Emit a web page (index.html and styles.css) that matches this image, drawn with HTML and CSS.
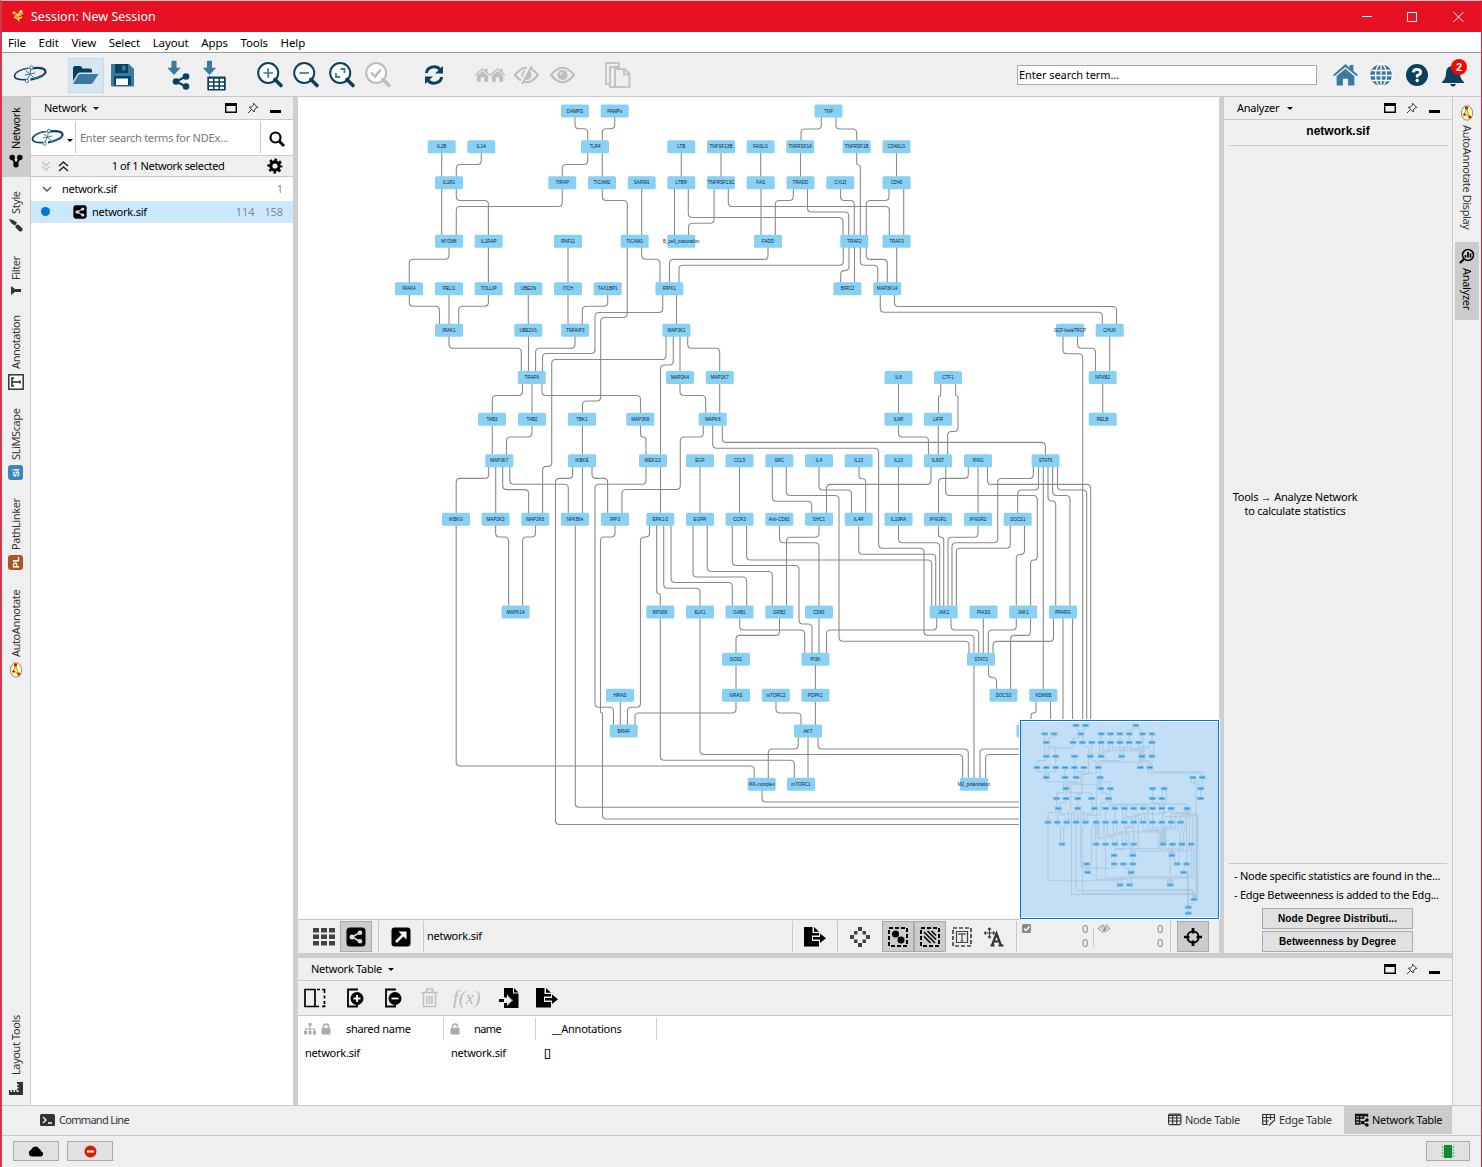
FILE: index.html
```html
<!DOCTYPE html>
<html lang="en">
<head>
<meta charset="utf-8">
<title>Session: New Session</title>
<link rel="stylesheet" href="styles.css">
</head>
<body>
<svg class="defs" width="0" height="0">
  <symbol id="logo" viewBox="0 0 34 20">
    <path d="M15 3.2C8 4.200 1.600 7.300 1.500 11c0 2.800 5 4.200 11.500 3.600" fill="none" stroke="#0b4160" stroke-width="1.600"/>
    <path d="M17 3.400c8-1 15-.4 15.500 2.900.3 3-5.500 6.600-15 8.300" fill="none" stroke="#0b4160" stroke-width="2.200"/>
    <path d="M3 8c3-3 7-4.500 14-4.800M32 8c-3 3-7 5-12 6" fill="none" stroke="#3a7a9f" stroke-width="1"/>
    <path d="M18 3.500L17 9l-3 6M13 6l4 3 4 4M12 10l5-1 5-1" fill="none" stroke="#3a7a9f" stroke-width="1"/>
    <circle cx="18.500" cy="2.500" r="1.600" fill="#fff" stroke="#3a7a9f"/><circle cx="14" cy="16" r="1.600" fill="#fff" stroke="#3a7a9f"/>
  </symbol>
  <symbol id="share" viewBox="0 0 18 18">
    <path d="M14 4L4 9l10 5" fill="none" stroke="currentColor" stroke-width="2.200"/>
    <circle cx="14" cy="4" r="3.300" fill="currentColor"/><circle cx="4" cy="9" r="3.300" fill="currentColor"/><circle cx="14" cy="14" r="3.300" fill="currentColor"/>
  </symbol>
  <symbol id="sharebox" viewBox="0 0 20 20">
    <rect x=".5" y=".5" width="19" height="19" rx="3.500" fill="#000"/>
    <path d="M14 5.500L6 10l8 4.500" fill="none" stroke="#ddd" stroke-width="1.600"/>
    <circle cx="14" cy="5.700" r="2.300" fill="#ddd"/><circle cx="6" cy="10" r="2.500" fill="#ddd"/><circle cx="14" cy="14.300" r="2.300" fill="#ddd"/>
  </symbol>
  <symbol id="lens" viewBox="0 0 36 36">
    <circle cx="16.200" cy="16" r="10" fill="#fff" fill-opacity=".8" stroke="currentColor" stroke-width="2"/>
    <path d="M23 22.500l6 6" stroke="currentColor" stroke-width="3.600" stroke-linecap="round"/>
  </symbol>
  <symbol id="float" viewBox="0 0 12 12"><path d="M.7 3.200V10.300H11.300V3" fill="none" stroke="#000" stroke-width="1.400"/><path d="M0 1h12v3H0z"/></symbol>
  <symbol id="pin" viewBox="0 0 12 12"><path d="M6.500 1.200l4.300 4.300-1.600.3L7.400 8l-.2 2L2.400 5.200l2-.2L6.600 3zM4.500 7.700L1 11" fill="none" stroke="#333"/></symbol>
  <symbol id="eye" viewBox="0 0 26 18">
    <path d="M1 9Q13-6 25 9 13 24 1 9z" fill="none" stroke="currentColor" stroke-width="2.200"/>
    <circle cx="13" cy="9" r="5.300" fill="currentColor"/><path d="M10.500 9a2.500 2.500 0 0 1 2.500-2.500" fill="none" stroke="#efefef" stroke-width="1.200"/>
  </symbol>
  <symbol id="eyeoff" viewBox="0 0 26 18">
    <use href="#eye" width="26" height="18"/><path d="M17-1L7 19" stroke="#efefef" stroke-width="4"/><path d="M18.500 0L8.500 18" stroke="currentColor" stroke-width="2"/>
  </symbol>
  <symbol id="house" viewBox="0 0 24 21">
    <path d="M12 0l4 3.500V1h3.500v5.500L24 10.500l-1.300 1.300L12 2.800 1.300 11.800 0 10.500zM12 4.600l8.500 7V20.500h-6V14h-5v6.500h-6v-9z" fill="currentColor"/>
  </symbol>
  <symbol id="export" viewBox="0 0 22 20">
    <path d="M0 0h8.500v6H15v2.500H8V14h7v5.500H0zM10 0l5 4.800h-5z"/><path d="M9 10h7V6.500l6 4.700-6 4.700V12.500H9z"/>
  </symbol>
  <symbol id="import" viewBox="0 0 20 20">
    <path d="M5 0h9v5.500h5.500V20H5v-5h3v3l6-5.500-6-6V9.500H5z"/><path d="M15 0l4.500 4.500H15zM0 11h9V8l4.500 4.500L9 17v-3H0z"/><path d="M5 11h4V8.500l4 4-4 4V14H5z" fill="#efefef"/>
  </symbol>
  <symbol id="lock" viewBox="0 0 10 12"><path d="M2.500 6V3.500a2.500 2.500 0 0 1 5 0V6" fill="none" stroke="#aaa" stroke-width="1.500"/><rect x=".5" y="5" width="9" height="6.500" rx="1" fill="#aaa"/></symbol>
  <symbol id="anno" viewBox="0 0 16 16"><ellipse cx="8" cy="8" rx="5.700" ry="7.200" fill="#ffffb0" stroke="#888"/><path d="M7.500 4L5.500 9l5 2.500z" fill="none" stroke="#6b3"/><circle cx="7.500" cy="3" r="1.700" fill="#f00"/><circle cx="5.500" cy="9.500" r="1.300" fill="#f00"/><circle cx="10.800" cy="12" r="1.500" fill="#f00"/></symbol>
  <symbol id="tbl" viewBox="0 0 14 14"><rect x=".6" y="1.100" width="12.300" height="10.500" rx="1.500" fill="none" stroke="#333" stroke-width="1.200"/><path d="M.6 2.500h12.300M.6 5h12.300M.6 8h12.300M4.700 2v9.500M8.700 2v9.500" stroke="#333" stroke-width="1.200"/></symbol>
</svg>

<div class="window">
  <header class="titlebar">
    <svg width="14" height="16" viewBox="0 0 14 16"><path d="M3 3l4 3 3-4M4 7l5-1 3-2M7 6l1 8M3 8l4 2 4-2" stroke="#ffd54a" stroke-width="1.500" fill="none"/><circle cx="3" cy="4" r="1.800" fill="#f7a72b"/><circle cx="10" cy="2.500" r="1.500" fill="#fce9a2"/><circle cx="8" cy="13" r="1.500" fill="#875c1e"/></svg>
    <span class="title">Session: New Session</span>
    <svg class="winbtns" width="104" height="12" viewBox="0 0 104 12"><path d="M1 5.500h10M46.500 1.500h9v9h-9zM92.500 1l10 10M102.500 1l-10 10" fill="none" stroke="#fff"/></svg>
  </header>
  <nav class="menu"><span>File</span><span>Edit</span><span>View</span><span>Select</span><span>Layout</span><span>Apps</span><span>Tools</span><span>Help</span></nav>

  <div class="toolbar">
    <span class="slot"><svg width="34" height="20"><use href="#logo"/></svg></span>
    <span class="gap"></span>
    <span class="slot active"><svg width="36" height="36" viewBox="0 0 36 36"><path d="M5 24V11q0-2 2-2h5q2 0 2.500 2.500h7.500q2 0 2 2v2H12q-2 0-3 2z" fill="#0b4160"/><path d="M12 17h18.500L25 25.500q-1 1.500-3 1.500H5l5-8.500Q11 17 12 17z" fill="#3a7a9f"/></svg></span>
    <span class="slot"><svg width="36" height="36" viewBox="0 0 36 36"><path d="M8 7h17l5 5v16.500q0 1-1 1H8q-1 0-1-1V8q0-1 1-1z" fill="#3a7a9f"/><path d="M11 7h13v9H11zM10 19h17v9.500H10z" fill="#0b4160"/><path d="M12 21.500h12V28H12z" fill="#fff"/><path d="M18 8.500h3.500v5H18z" fill="#3a7a9f"/></svg></span>
    <span class="gap"></span>
    <span class="slot"><svg width="36" height="36" viewBox="0 0 36 36"><path d="M11.500 3.700h5v7h4.200L14 18 7.300 10.700h4.200z" fill="#3a7a9f"/><svg x="12" y="15.500" width="18" height="18" color="#0b4160"><use href="#share"/></svg></svg></span>
    <span class="slot"><svg width="36" height="36" viewBox="0 0 36 36"><path d="M11 3.700h5v7h4.200L13.500 18 6.800 10.700H11z" fill="#3a7a9f"/><rect x="11.300" y="19.500" width="18.500" height="14" rx="1" fill="#0b4160"/><path d="M13 21.700h4v2.600h-4zM18.500 21.700h4v2.600h-4zM24 21.700h4v2.600h-4zM13 25.700h4v2.600h-4zM18.500 25.700h4v2.600h-4zM24 25.700h4v2.600h-4zM13 29.700h4v2.300h-4zM18.500 29.700h4v2.300h-4zM24 29.700h4v2.300h-4z" fill="#fff"/></svg></span>
    <span class="gap"></span>
    <span class="slot navy"><svg width="36" height="36" viewBox="0 0 36 36"><use href="#lens"/><path d="M11.500 16h9.500M16.200 11.200v9.600" stroke="#3a7a9f" stroke-width="1.700"/></svg></span>
    <span class="slot navy"><svg width="36" height="36" viewBox="0 0 36 36"><use href="#lens"/><path d="M11.500 16h9.500" stroke="#3a7a9f" stroke-width="1.700"/></svg></span>
    <span class="slot navy"><svg width="36" height="36" viewBox="0 0 36 36"><use href="#lens"/><path d="M16.500 12h4v4M12 16v4h4" fill="none" stroke="#3a7a9f" stroke-width="1.800"/></svg></span>
    <span class="slot dim"><svg width="36" height="36" viewBox="0 0 36 36"><use href="#lens"/><path d="M11 15.500l4 4 6-7" fill="none" stroke="#bbb" stroke-width="2.400"/></svg></span>
    <span class="gap"></span>
    <span class="slot navy"><svg width="36" height="36" viewBox="0 0 36 36"><path d="M10.500 16a7.500 6.500 0 0 1 13.500-3.500M25.500 20a7.500 6.500 0 0 1-13.500 3.500" fill="none" stroke="#0b4160" stroke-width="3"/><path d="M27 9v7.500h-8zM9 27v-7.500h8z" fill="#0b4160"/></svg></span>
    <span class="gap"></span>
    <span class="slot dim"><svg width="32" height="18" viewBox="0 0 32 18"><svg x="0" y="2" width="17" height="14"><use href="#house"/></svg><svg x="15" y="2" width="17" height="14"><use href="#house"/></svg></svg></span>
    <span class="slot dim"><svg width="25" height="18"><use href="#eyeoff"/></svg></span>
    <span class="slot dim"><svg width="25" height="18"><use href="#eye"/></svg></span>
    <span class="gap"></span>
    <span class="slot"><svg width="26" height="28" viewBox="0 0 26 28"><g fill="#efefef" stroke="#c4c4c4" stroke-width="2"><path d="M1 2h13v21H1z"/><path d="M5 6h9v20H5z"/><path d="M10 8h9.500l5 5V26H10zM19 8v5.500h6"/></g></svg></span>
    <div class="search">Enter search term...</div>
    <span class="slot"><svg width="25" height="22" color="#3a7a9f"><use href="#house"/></svg></span>
    <span class="slot"><svg width="24" height="24" viewBox="0 0 24 24"><circle cx="12" cy="12" r="11.800" fill="#fff"/><circle cx="12" cy="12" r="10.800" fill="#3a7a9f"/><path d="M12 1v22M2.500 7.500h19M1 12.500h22M3 17.500h18" stroke="#fff" stroke-width="1.300"/><ellipse cx="12" cy="12" rx="5.500" ry="11" fill="none" stroke="#fff" stroke-width="1.300"/></svg></span>
    <span class="slot"><svg width="24" height="24" viewBox="0 0 24 24"><circle cx="12" cy="12" r="11" fill="#0b4160"/><path d="M8.300 9.300Q8.500 6.300 12 6.300t3.700 2.900Q15.700 11.300 12.200 12.500v2" fill="none" stroke="#fff" stroke-width="2.700"/><circle cx="12.200" cy="17.500" r="1.700" fill="#fff"/></svg></span>
    <span class="slot bell"><svg width="24" height="24" viewBox="0 0 24 24"><path d="M1 19q4-3 4-9 0-7 7-7t7 7q0 6 4 9v1H1zM9 21h6q-1 2.500-3 2.500T9 21z" fill="#0b4160"/></svg><b class="badge">2</b></span>
  </div>

  <main class="body">
    <aside class="rail left">
      <div class="tab on" style="height:80px"><svg width="14" height="14" viewBox="0 0 14 14"><path d="M3 3.500l4 7.500 4-7.500" stroke="#000" stroke-width="2" fill="none"/><circle cx="3.200" cy="3.500" r="2.700"/><circle cx="10.800" cy="3.500" r="2.700"/><circle cx="7" cy="10.800" r="2.700"/></svg><span>Network</span></div>
      <div class="tab" style="height:65px"><svg width="14" height="14" viewBox="0 0 14 14"><path d="M0 0q4 0 8 3.500L6 6.500Q2 5 0 0z" fill="#333"/><path d="M8.500 7.500l3 3" stroke="#333" stroke-width="4" stroke-linecap="round"/></svg><span>Style</span></div>
      <div class="tab" style="height:64px"><svg width="12" height="12" viewBox="0 0 12 12"><path d="M1 1v9l4-3h6V4H5z" fill="#333"/></svg><span>Filter</span></div>
      <div class="tab" style="height:93px"><svg width="16" height="16" viewBox="0 0 16 16"><rect x=".8" y=".8" width="14.400" height="14.400" fill="#fff" stroke="#333" stroke-width="1.500"/><path d="M6 4H4v8h2M4 8h8M12 6.500v3" fill="none" stroke="#222" stroke-width="1.500"/></svg><span>Annotation</span></div>
      <div class="tab" style="height:90px"><b class="chip blue">Si</b><span>SLiMScape</span></div>
      <div class="tab" style="height:90px"><b class="chip brown">PL</b><span>PathLinker</span></div>
      <div class="tab" style="height:108px"><svg width="16" height="16"><use href="#anno"/></svg><span>AutoAnnotate</span></div>
      <div class="tab last" style="height:93px"><svg width="16" height="16" viewBox="0 0 16 16"><path d="M15 2v13H1v-5h1.500v2H4v-2h1.500v2H7v-2h1.500v2h2v-2H9V8.500h1.500V7H9V5.500h1.500V4H9V2z" fill="#333"/></svg><span>Layout Tools</span></div>
    </aside>

    <section class="netpanel">
      <div class="phead"><span class="s-net">Network</span><i class="caret up1"></i><span class="tools"><svg width="12" height="12"><use href="#float"/></svg><svg width="12" height="12"><use href="#pin"/></svg><i class="min"></i></span></div>
      <div class="ndex"><svg width="33" height="20"><use href="#logo"/></svg><i class="caret low"></i><span class="ph">Enter search terms for NDEx...</span><span class="mag"><svg width="16" height="16" viewBox="0 0 16 16"><circle cx="6.500" cy="6.500" r="5" fill="none" stroke="#000" stroke-width="2.200"/><path d="M10 10l5 5" stroke="#000" stroke-width="2.800"/></svg></span></div>
      <div class="selrow"><svg width="30" height="12" viewBox="0 0 30 12" fill="none" stroke-width="1.500"><path d="M1 2l4 3.500L9 2M1 6.500L5 10l4-3.500" stroke="#c4c4c4"/><path d="M18 6l4.500-4L27 6M18 11l4.500-4L27 11" stroke="#222"/></svg><span class="count">1 of 1 Network selected</span><svg width="16" height="16" viewBox="0 0 16 16"><circle cx="8" cy="8" r="4.200" fill="none" stroke="#000" stroke-width="3.200"/><circle cx="8" cy="8" r="6.300" fill="none" stroke="#000" stroke-width="2.600" stroke-dasharray="2.500 2.448" stroke-dashoffset="1.250"/></svg></div>
      <div class="trow"><svg width="10" height="8" viewBox="0 0 10 8"><path d="M1 2l4 4 4-4" fill="none" stroke="#555" stroke-width="1.400"/></svg><span class="tname">network.sif</span><span class="num">1</span></div>
      <div class="trow sel"><i class="dot"></i><svg width="14" height="14"><use href="#sharebox"/></svg><span class="tname">network.sif</span><span class="num">114</span><span class="num">158</span></div>
    </section>
    <i class="split v"></i>

    <div class="center">
      <div class="upper">
        <section class="view">
          <div class="canvas">
            <svg id="graph" width="921" height="822" viewBox="298 97 921 822"></svg>
            <div class="birdseye"><svg id="mini" width="197" height="195" viewBox="0 0 197 195"></svg></div>
          </div>
          <div class="vbar">
            <span class="vs g1"><svg width="22" height="18" viewBox="0 0 22 18"><path d="M0 0h6v4.500H0zM8 0h6v4.500H8zM16 0h6v4.500h-6zM0 6.500h6V11H0zM8 6.500h6V11H8zM16 6.500h6V11h-6zM0 13h6v4.500H0zM8 13h6v4.500H8zM16 13h6v4.500h-6z" fill="#444"/></svg></span>
            <span class="vs on"><svg width="20" height="20"><use href="#sharebox"/></svg></span>
            <i class="sep s6"></i>
            <span class="vs"><svg width="20" height="20" viewBox="0 0 20 20"><rect x=".5" y=".5" width="19" height="19" rx="3" fill="#000"/><path d="M5 15l8-8" stroke="#fff" stroke-width="2.500"/><path d="M7.500 4.500h8v8z" fill="#fff"/></svg></span>
            <i class="sep s6"></i>
            <span class="vname">network.sif</span>
            <i class="sep push"></i>
            <span class="vs w44"><svg width="22" height="20"><use href="#export"/></svg></span>
            <i class="sep"></i>
            <span class="vs w44"><svg width="20" height="20" viewBox="0 0 20 20"><path d="M8 0h4v4H8zM8 16h4v4H8zM0 8h4v4H0zM16 8h4v4h-4zM4 4h3.500v3.500H4zM12.500 4H16v3.500h-3.500zM4 12.500h3.500V16H4zM12.500 12.500H16V16h-3.500z" fill="#444"/></svg></span>
            <span class="vs on"><svg width="20" height="20" viewBox="0 0 20 20"><rect x="1" y="1" width="18" height="18" fill="none" stroke="#000" stroke-width="2" stroke-dasharray="4 2"/><circle cx="7.500" cy="7" r="3.500"/><circle cx="13" cy="13" r="3.500"/><path d="M7 7l6 6" stroke="#000"/></svg></span>
            <span class="vs on"><svg width="20" height="20" viewBox="0 0 20 20"><rect x="1" y="1" width="18" height="18" fill="none" stroke="#000" stroke-width="2" stroke-dasharray="4 2"/><path d="M4 5l11 11M7.500 4L16 12.500M4 9.500l6.500 6.500M11.500 4L16 8.500" stroke="#000" stroke-width="1.500"/></svg></span>
            <span class="vs"><svg width="20" height="20" viewBox="0 0 20 20"><rect x="1" y="1" width="18" height="18" fill="none" stroke="#444" stroke-width="1.700" stroke-dasharray="4 2"/><path d="M4.500 4.500h11v11h-11zM7 8V6.800h6V8M10 7v7M8.500 14h3" fill="none" stroke="#444" stroke-width="1.200"/></svg></span>
            <span class="vs"><svg width="20" height="20" viewBox="0 0 20 20"><path d="M5.500 1v10M.5 6h10M4 2.500L5.500 1 7 2.500M4 9.500L5.500 11 7 9.500M2 4.500L.5 6 2 7.500M9 4.500L10.500 6 9 7.500" fill="none" stroke="#444" stroke-width="1.200"/><path d="M8 18.500l4.500-12 4.500 12M10 14.500h5.500M6.500 18.500h4M14.500 18.500h5" fill="none" stroke="#333" stroke-width="2.200"/></svg></span>
            <i class="sep s65"></i>
            <span class="cnt c1"><svg width="9" height="9" viewBox="0 0 9 9"><rect width="9" height="9" rx="1.500" fill="#888"/><path d="M2 4.500l2 2 3.500-4" fill="none" stroke="#fff" stroke-width="1.400"/></svg><span>0<br>0</span></span>
            <i class="sep short"></i>
            <span class="cnt c2"><svg width="12" height="9" color="#888"><use href="#eyeoff"/></svg><span>0<br>0</span></span>
            <i class="sep"></i>
            <span class="vs on aim"><svg width="18" height="18" viewBox="0 0 18 18"><circle cx="9" cy="9" r="5.700" fill="none" stroke="#000" stroke-width="1.800"/><path d="M9 0v5.500M9 12.500V18M0 9h5.500M12.500 9H18" stroke="#000" stroke-width="2.700"/></svg></span>
          </div>
        </section>
        <i class="split v"></i>
        <section class="analyzer">
          <div class="phead"><span class="s-an">Analyzer</span><i class="caret"></i><span class="tools"><svg width="12" height="12"><use href="#float"/></svg><svg width="12" height="12"><use href="#pin"/></svg><i class="min"></i></span></div>
          <b class="atitle">network.sif</b>
          <p class="ahint"><span>Tools → Analyze Network</span><br><span>to calculate statistics</span></p>
          <div class="anotes"><span class="n1">- Node specific statistics are found in the...</span><span class="n2">- Edge Betweenness is added to the Edg...</span></div>
          <button class="abtn">Node Degree Distributi...</button>
          <button class="abtn">Betweenness by Degree</button>
        </section>
      </div>
      <i class="split h"></i>
      <section class="table">
        <div class="phead"><span class="s-nt">Network Table</span><i class="caret up1"></i><span class="tools"><svg width="12" height="12"><use href="#float"/></svg><svg width="12" height="12"><use href="#pin"/></svg><i class="min"></i></span></div>
        <div class="ttools">
          <svg width="22" height="20" viewBox="0 0 22 20" fill="none" stroke="#000" stroke-width="1.700"><path d="M1 1.500h10v17H1zM13 1.500h3M18 1.500h2.500V5M20.500 7.500v3M20.500 13v3M20.500 17v1.500H18M15 18.500h-3"/></svg>
          <svg class="m20" width="18" height="20" viewBox="0 0 18 20"><path d="M11 2.500V1.500H2v17h9v-2" fill="none" stroke="#000" stroke-width="1.800"/><circle cx="11" cy="10.500" r="6.500"/><path d="M11 7v7M7.500 10.500h7" stroke="#fff" stroke-width="1.800"/></svg>
          <svg class="m20" width="18" height="20" viewBox="0 0 18 20"><path d="M11 2.500V1.500H2v17h9v-2" fill="none" stroke="#000" stroke-width="1.800"/><circle cx="11" cy="10.500" r="6.500"/><path d="M7.500 10.500h7" stroke="#fff" stroke-width="1.800"/></svg>
          <svg class="m19" width="18" height="20" viewBox="0 0 18 20" fill="none" stroke="#c0c0c0" stroke-width="1.600"><path d="M0 4.500h17M5.500 4V1h6v3M2.500 5v13.500h12V5M6 8v8M8.500 8v8M11 8v8"/></svg>
          <span class="fx">f(x)</span>
          <svg class="m18" width="20" height="20"><use href="#import"/></svg>
          <svg class="m16" width="22" height="20"><use href="#export"/></svg>
        </div>
        <div class="grid head">
          <span><svg width="12" height="12" viewBox="0 0 12 12"><path d="M4.500 0h3v3h-3zM0 8h3v3.500H0zM4.500 8h3v3.500h-3zM9 8h3v3.500H9zM5.500 3h1v2.500h4.700V8h-1V6.500H6.500V8h-1V6.500H2V8H1V5.500h4.500z" fill="#aaa"/></svg><svg width="10" height="12"><use href="#lock"/></svg><em class="h1">shared name</em></span>
          <span><svg width="10" height="12"><use href="#lock"/></svg><em class="h2">name</em></span>
          <span><em class="h3">__Annotations</em></span>
        </div>
        <div class="grid row"><span>network.sif</span><span>network.sif</span><span class="list">[]</span></div>
      </section>
    </div>

    <aside class="rail right">
      <div class="tab" style="height:145px"><svg width="16" height="16"><use href="#anno"/></svg><span>AutoAnnotate Display</span></div>
      <div class="tab on" style="height:78px"><svg width="16" height="16" viewBox="0 0 16 16"><circle cx="9" cy="7" r="5.500" fill="none" stroke="#000" stroke-width="1.500"/><path d="M5 11l-4 4" stroke="#000" stroke-width="2.200"/><path d="M6.500 9.500V7M9 9.500V4M11.500 9.500V5.500" stroke="#000" stroke-width="1.700"/></svg><span>Analyzer</span></div>
    </aside>
  </main>

  <footer class="dock">
    <svg width="15" height="12" viewBox="0 0 15 12"><rect width="15" height="12" rx="1.500" fill="#333"/><path d="M3 3l3 3-3 3M8 9h4" fill="none" stroke="#fff" stroke-width="1.300"/></svg><span class="d0">Command Line</span>
    <span class="dtab d1"><svg width="14" height="14"><use href="#tbl"/></svg><em>Node Table</em></span>
    <span class="dtab d2"><svg width="14" height="14" viewBox="0 0 14 14"><path d="M12.500 6V1.500H.7v10h5M.7 4.500h11M.7 8h6M4.500 1.500v10M8.500 1.500V7M7 12.500l6-6" fill="none" stroke="#333" stroke-width="1.200"/></svg><em>Edge Table</em></span>
    <span class="dtab d3 on"><svg width="14" height="14" viewBox="0 0 14 14"><path d="M12.500 4V1.500H.7v9.500h5M.7 2.500h11M.7 5h8M.7 8h5M4.500 2v9M8.500 2v4M12 7L7.500 9.500 12 12.500" fill="none" stroke="#111" stroke-width="1.400"/><circle cx="12" cy="7" r="1.700"/><circle cx="7.500" cy="9.500" r="1.700"/><circle cx="12" cy="12" r="1.700"/></svg><em>Network Table</em></span>
  </footer>
  <footer class="status">
    <span class="sbtn"><svg width="16" height="11" viewBox="0 0 16 11"><path d="M4 10.500a3.300 3.300 0 0 1-1-6.400 4.500 4.500 0 0 1 8.300-1.200 2.500 2.500 0 0 1 1.700 2.300 2.700 2.700 0 0 1 0 5.300z"/></svg></span>
    <span class="sbtn"><svg width="13" height="13" viewBox="0 0 13 13"><circle cx="6.500" cy="6.500" r="6" fill="#d21f0c"/><path d="M3 6.500h7" stroke="#fff" stroke-width="2"/></svg></span>
    <span class="sbtn mem"><svg width="14" height="13" viewBox="0 0 14 13"><path d="M3 0h8v13H3z" fill="#128a38"/><path d="M1 2h1.500M1 5h1.500M1 8h1.500M1 11h1.500M11.500 2H13M11.500 5H13M11.500 8H13M11.500 11H13" stroke="#128a38"/></svg></span>
  </footer>
</div>
<script src="graph.js"></script>
</body>
</html>
```
FILE: styles.css
```css
* { box-sizing: border-box; }
body { margin: 0; background: #efefef; color: #000; font: 11px/14px "Noto Sans", "Open Sans", sans-serif; letter-spacing: -.25px; }
em { font-style: normal; }
i { display: block; flex: none; }
svg { display: block; flex: none; overflow: visible; }
.defs { display: none; }
.window { width: 1482px; height: 1167px; display: flex; flex-direction: column; border: solid #d81e35; border-width: 0 1px 0 1px; border-top: 1px solid #c9c9c9; border-left: 2px solid #cf3b4c; }
.titlebar { height: 31px; background: #e81123; color: #fff; display: flex; align-items: center; padding: 0 16px 0 9px; }
.title { margin-left: 6px; font-size: 12.5px; letter-spacing: 0; padding-top: 1px; }
.winbtns { margin-left: auto; }
.menu { height: 21px; background: #fff; border-bottom: 1px solid #999; display: flex; align-items: center; gap: 12.6px; padding: 2px 0 0 6px; font-size: 11.5px; letter-spacing: -.1px; }
.toolbar { height: 44px; border-bottom: 1px solid #c8c8c8; display: flex; align-items: center; padding: 1px 10px 0; }
.slot { width: 36px; height: 36px; display: flex; align-items: center; justify-content: center; flex: none; }
.slot.active { height: 35px; background: #d6e5f0; box-shadow: inset 0 0 0 1px #bcdcf4; }
.navy { color: #0b4160; }
.dim { color: #bdbdbd; }
.gap { width: 20px; flex: none; }
.search { width: 300px; height: 20px; background: #fff; border: 1px solid #a8a8b0; margin: 0 10px 0 auto; padding: 2px 1px; letter-spacing: -.05px; }
.bell { position: relative; }
.badge { position: absolute; left: 16px; top: 2px; width: 16px; height: 16px; border-radius: 50%; background: #f00; color: #fff; font: bold 11px/16px "Liberation Sans", sans-serif; text-align: center; }

.body { height: 1009px; display: flex; border-bottom: 1px solid #c8c8c8; flex: none; }
.rail { display: flex; flex-direction: column; flex: none; }
.rail.left { width: 29px; border-right: 1px solid #c8c8c8; }
.rail.right { width: 29px; border-left: 1px solid #c8c8c8; padding: 0 2px; }
.tab { writing-mode: vertical-rl; display: flex; align-items: center; gap: 5px; color: #333; flex: none; white-space: nowrap; letter-spacing: -.4px; }
.tab.on { background: #ccc; color: #000; }
.left .tab { transform: rotate(180deg); padding-top: 9px; }
.left .tab svg { transform: rotate(180deg); }
.left .last { margin-top: auto; }
.right .tab { padding-top: 8px; gap: 4px; }
.right .tab.on { padding-top: 6px; letter-spacing: -.3px; }
.chip { width: 15px; height: 15px; border-radius: 3px; color: #fff; font: bold 9px/15px "Liberation Sans", sans-serif; text-align: center; letter-spacing: 0; }
.blue { background: #3a86c0; }
.brown { background: #ad5427; }
.netpanel { width: 262px; background: #fff; flex: none; }
.phead { height: 23px; background: #efefef; border-bottom: 1px solid #c8c8c8; display: flex; align-items: center; padding: 0 7px 0 13px; flex: none; }
.caret { border: solid transparent; border-width: 3px 3px 0; border-top-color: #000; margin-left: 8px; }
.caret.up1 { margin-left: 6px; }
.tools { margin-left: auto; display: flex; align-items: center; }
.tools > svg { margin: 0 5px; }
.tools .min { width: 11px; height: 3px; background: #000; margin: 6px 5px 0 6px; }
.ndex { height: 36px; display: flex; align-items: center; border-bottom: 1px solid #c8c8c8; }
.caret.low { margin: 5px 2px 0 3px; }
.ph { width: 186px; height: 31px; line-height: 31px; border: solid #c8c8c8; border-width: 0 1px; color: #777; padding-left: 4px; white-space: nowrap; }
.mag { flex: 1; display: flex; justify-content: center; padding-top: 2px; }
.selrow { height: 21px; background: #efefef; border-bottom: 1px solid #c8c8c8; display: flex; align-items: center; justify-content: space-between; padding: 0 10px; }
.count { letter-spacing: -.38px; margin-right: 2px; }
.trow { height: 24px; display: flex; align-items: center; padding: 0 10px 0 11px; }
.trow .tname { margin: 0 auto 0 10px; }
.trow.sel { height: 22px; background: #cce8ff; border-bottom: 1px solid #dde6ee; }
.dot { width: 9px; height: 9px; border-radius: 50%; background: #0078d7; margin: 0 23px 0 -1px; }
.trow.sel .tname { margin-left: 5px; }
.num { color: #888; margin-left: 10px; letter-spacing: -.1px; }
.split { background: #cecece; }
.split.v { width: 5px; }
.split.h { height: 5px; }
.center { flex: 1; min-width: 0; display: flex; flex-direction: column; }
.upper { height: 856px; display: flex; flex: none; }
.view { width: 921px; flex: none; }
.canvas { height: 822px; background: #fff; position: relative; }
.birdseye { position: absolute; right: 0; bottom: 0; width: 199px; height: 199px; border: 1px solid #0078d7; background: #fff; box-shadow: 0 0 0 1px #fff; padding-top: 1px; }
.birdseye svg { background: #c3dff5; overflow: hidden; }
.vbar { height: 34px; border-top: 1px solid #c8c8c8; display: flex; align-items: center; }
.vs { width: 32px; height: 31px; display: flex; align-items: center; justify-content: center; flex: none; }
.vs.g1 { margin-left: 10px; }
.vs.on { background: #ccc; border: 1px solid #aaa; }
.vs.w44 { width: 44px; }
.sep { width: 1px; height: 31px; background: #c8c8c8; }
.s6 { margin: 0 6px; }
.s65 { margin: 0 5px 0 6px; }
.vname { margin: -2px 0 0 -3px; }
.push { margin-left: auto; }
.cnt { display: flex; justify-content: space-between; color: #888; height: 28px; margin-top: -2px; }
.cnt svg { margin-top: 2px; }
.c1 { width: 66px; }
.c2 { width: 65px; margin: -2px 7px 0 4px; }
.sep.short { height: 20px; margin-left: 5px; }
.aim { margin: 0 10px 0 6px; }
.analyzer { flex: 1; min-width: 0; overflow: hidden; display: flex; flex-direction: column; }
.atitle { font: bold 12px/18px "Liberation Sans", sans-serif; letter-spacing: 0; text-align: center; margin: 0 5px; padding: 2px 0 5px; border-bottom: 1px solid #c8c8c8; }
.ahint { margin: auto 86px auto 4px; padding-bottom: 2px; width: 134px; text-align: center; white-space: nowrap; }
.anotes { display: flex; flex-direction: column; gap: 5px; margin: 0 5px 6px; border-top: 1px solid #c8c8c8; padding: 5px 0 0 5px; white-space: nowrap; }
.abtn { width: 151px; height: 21px; margin: 0 0 2px 38px; border: 1px solid #aaa; background: #e1e1e1; font: bold 10px/14px "Liberation Sans", sans-serif; letter-spacing: .1px; padding: 0; }
.abtn:last-child { margin-bottom: 1px; }
.table { flex: 1; background: #fff; }
.ttools { height: 35px; background: #efefef; border-bottom: 1px solid #c8c8c8; display: flex; align-items: center; padding-left: 6px; }
.m19 { margin-left: 19px; } .m20 { margin-left: 20px; } .m18 { margin-left: 18px; } .m16 { margin-left: 17px; }
.fx { margin-left: 14px; font: italic 19px/20px "Liberation Serif", serif; letter-spacing: .4px; color: #bbb; }
.grid { display: grid; grid-template-columns: 146px 92px 121px; }
.grid span { display: flex; align-items: center; }
.head { margin-top: 2px; height: 22px; }
.head span { border-right: 1px solid #d0d0d0; gap: 5px; padding-left: 6px; }
.head .h1 { margin-left: 10px; letter-spacing: -.4px; } .head .h1 { letter-spacing: -.3px; } .head .h2 { margin-left: 9px; letter-spacing: -.6px; } .head .h3 { margin-left: 10px; }
.row { height: 26px; }
.row span { padding-left: 7px; }
.row .list { padding-left: 8px; }
.dock { height: 30px; display: flex; align-items: center; padding: 0 29px 1px 38px; border-bottom: 1px solid #c8c8c8; color: #333; flex: none; }
.d0 { margin-left: 4px; letter-spacing: -.7px; }
.dtab { display: flex; align-items: center; gap: 3px; height: 28px; letter-spacing: -.32px; }
.d1 { margin-left: auto; width: 94px; }
.d2 { width: 82px; }
.d3 { padding-left: 11px; width: 108px; }
.d3.on { background: #ccc; color: #000; }
.status { flex: 1; display: flex; align-items: center; padding: 0 11px 1px; gap: 8px; }
.sbtn { width: 46px; height: 20px; border: 1px solid #aaa; background: #e1e1e1; display: flex; align-items: center; justify-content: center; }
.mem { width: 44px; margin-left: auto; }
.edge { fill: none; stroke: #8a8a8a; stroke-width: 1.100; }
.node { fill: #89d0f5; }
.label { font: 4.600px "Liberation Sans", sans-serif; letter-spacing: 0; fill: #123; text-anchor: middle; }
.mini-edge { fill: none; stroke: #9db9cf; stroke-width: 3; stroke-opacity: .8; }
.mini-node { fill: #6bbaee; }
.mini-mark { fill: #3f93c8; }
```
FILE: graph.js
```js
// Rows of the hierarchic layout: vertical centre, then name and horizontal centre of every node.
const rows = [
  [110.9, 'DAMPS 575 PAMPs 614.7 TNF 828.5'],
  [146.7, 'IL1B 441.7 IL1A 481.3 TLR4 595 LTB 681.3 TNFSF13B 721 FASLG 760.7 TNFRSF1A 800.3 TNFRSF1B 856.7 CD40LG 896.5'],
  [182.7, 'IL1R1 449 TIRAP 562.3 TICAM2 602 SARM1 641.7 LTBR 681.3 TNFRSF13C 721 FAS 760.7 TRADD 800.5 CYLD 840.3 CD40 896.5'],
  [241.3, 'MYD88 449 IL1RAP 488.6 RNF11 568 TICAM1 634.7 B_cell_maturation 681.3 FADD 768 TRAF2 854.3 TRAF3 896.5'],
  [288.7, 'IRAK4 409 PELI1 449 TOLLIP 488.6 UBE2N 528.3 ITCH 568 TAX1BP1 607.7 RIPK1 669.4 BIRC2 847.4 MAP3K14 887.2'],
  [330.3, 'IRAK1 449 UBE2V1 528.3 TNFAIP3 575.2 MAP3K1 676.5 SCF-betaTRCP 1070 CHUK 1109.7'],
  [377.5, 'TRAF6 531.8 MAP2K4 680 MAP2K7 719.8 IL6 898.5 CTF1 948 NFKB2 1102.7'],
  [419.2, 'TAB3 492 TAB2 532 TBK1 582 MAP3K8 640.3 MAPK8 712.7 IL6R 898.5 LIFR 938 RELB 1102.7'],
  [460.8, 'MAP3K7 499.3 IKBKE 582 MEK1/2 653 EGF 700 CCL5 739.5 SRC 779.3 IL4 819 IL13 858.7 IL10 898.5 IL6ST 938 IFNG 978 STAT6 1045.6'],
  [519.3, 'IKBKG 456 MAP2K3 495.6 MAP2K6 535.3 NFKBIA 575 IRF3 615 ERK1/2 660.3 EGFR 700 CCR3 739.5 Anti-CD81 779.3 SHC1 819 IL4R 858.7 IL10RA 898.5 IFNGR1 938 IFNGR2 978 SOCS1 1017.7'],
  [612, 'MAPK14 515.6 RPS6K 660.3 ELK1 700 GAB1 739.5 GRB2 779.3 CD81 819 JAK2 943.7 PIAS3 983.5 JAK1 1023.2 PPARG 1063'],
  [659.3, 'SOS1 736 PI3K 815.4 STAT3 981'],
  [695.2, 'HRAS 620 NRAS 736 mTORC2 775.8 PDPK1 815.4 SOCS3 1003.5 KDM6B 1043.3'],
  [731, 'BRAF 623.7 AKT 808 IRF4 1030.5'],
  [784.2, 'IKK-complex 761.7 mTORC1 801 M2_polarization 974'],
  [844.5, 'NFKB1 1074.6'],
  [878, 'Nucleus 1050.6'],
  [903.5, 'Output 1050.6']
];

// Each edge: start x and y, then alternating vertical stop and horizontal stop.
const edges = `
575 111 128.7 587.7 147;614.7 111 128.7 602.3 147;441.7 147 183;481.3 147 164.5 456.3 183;441.7 183 241;456.3 183 200.5 488.4 241
587.7 147 164.5 562.3 183;602.3 147 183;562.3 183 206.5 456.3 241;602.3 183 200.5 627.3 241;641.7 183 241;449 241 259.3 409.3 289
488.4 241 289;568 241 289;568 289 330;409.3 289 306.3 439.5 330;449 289 330;488.4 289 306.3 458.7 330;528.3 289 330
607.7 289 306.3 582.3 330;641.7 241 259.3 660 289;627.3 241 317.5 600.7 401 582.5 419;662.7 289 312.5 595 353.5 542.5 377
676.5 289 330;449 330 348.3 521.3 377;528.5 330 377;575 330 348.3 535.6 377;666 330 359.5 551.7 466.4 542.6 519
673.3 330 365 660.5 519;680 330 377;687.7 330 348.3 719.7 377;680 377 395.5 705.7 419;719.7 377 419;522.5 377 395.5 492.3 419
532 377 419;542 377 395.5 640.5 419;492.3 419 461;532 419 437 506.5 461;582.4 419 461;640.5 419 437 646 461
703.3 419 437 680.3 489.5 622 519;712.7 419 448.3 878.6 548.3 924 635.3 974 659;722.3 419 442.4 1045.4 461
488.7 461 478.4 456.2 519;456.2 519 766 754.2 784;495.7 461 519;502.7 461 489.6 528.6 519;509.8 461 484.3 568.3 519
572.6 461 478.4 555.5 824.5 1081 845;582.5 461 519;592 461 478.4 607.6 519;646 461 484.3 595 707.3 613.5 731
615 519 537 600.5 712.7 602.5 819 1077 845;649.5 519 537 640.5 707.3 627.5 731;656.7 519 593.5 660.3 612;660.3 612 760.3 794.3 784
663.7 519 588.3 700 612;671 519 582.5 732.3 612;495.6 519 537 508.6 612;535.5 519 537 522.6 612;575.3 519 807.3 1073 845
700 612 754.5 962.6 784;700 461 519;693 519 577 746.7 612;707.3 519 571.5 772.3 612;739.5 461 519
732.3 519 565.5 799 624 812 659;746.6 519 560 931.7 612;772.3 461 501.3 811.7 519;786.3 461 495.5 839 641.3 969 659
819 461 490 851.5 519;859 461 478.7 865.7 519;898.5 461 519;931 461 484.4 826.5 519;945.7 461 495.5 1037.3 560 1030.6 612
968.3 461 478.4 938.5 519;978 461 519;987.5 461 484.4 1090.7 845;1033.3 461 478.5 997.7 542.7 952 612;1038.5 461 490 1017.7 519
1043.3 461 695;1048 461 501 1055.7 612;1052.6 461 495.5 1070 612;1057.5 461 490 1086.7 845;779.5 519 542.7 819 612
819 519 537.2 786.5 612;858.7 519 554.3 935.7 612;898.5 519 542.7 939.7 612;938.5 519 537.2 943.7 612;978 519 537.2 948 612
1010.3 519 548.3 956.3 612;1024.5 519 554.5 1016.3 612;739.7 612 630 804.7 659;779.5 612 635.4 736 659;736 659 695
736 695 713 635 731;819 612 659;815.4 659 695;815.4 695 731;776 695 713 801 731;936.7 612 630 826.5 659
951 612 630 978.7 659;983.3 612 659;1016.3 612 630 988.3 659;1030.5 612 635.4 1010.6 695;1053.5 612 641.4 993 659
1063 612 749 980 784;1072.5 612 754.5 985.6 784;974 659 784;988.5 659 677.5 996.5 695;1036 695 713 1031 731
1050.5 695 878;620.3 695 731;798.3 731 749 768.3 784;808 731 784;818 731 749 968.3 784;762 784 802 1070 845
1063 330 353.7 1082.7 845;1077.5 330 348.3 1095.5 377;1109.7 330 377;1102.7 377 419;880.3 289 312.2 1102.3 330
894.5 289 306.5 1116.5 330;821.3 111 129 801 147;836 111 129 856.7 147;681.3 147 183;721 147 183;760.7 147 183;800.5 147 183
856.7 147 165 860.3 241;896.5 147 183;674.5 183 241;688.3 183 217.5 843 241;714 183 223.3 688.5 241;728.3 183 206.5 889.3 241
761 183 241;793.3 183 200.5 775.3 241;807.5 183 212 848.7 241;840.5 183 200.5 854.3 241;889 183 200.5 866.3 241
903.7 183 241;896.7 241 289;768 241 259.4 669.5 289;843.3 241 265.2 679 289;849 241 270.6 840.7 289;854.5 241 289
860.3 241 265.2 877.7 289;866.3 241 259.4 887.3 289;898.5 377 419;940.7 377 396 938.5 419;955.6 377 396 958 431.5 947.6 461
898.5 419 437 928.5 461;938.3 419 461;1046 731 878;1074.6 845 862 1054 878;1050.6 878 903`;

const radius = 4;

// Turn the alternating stops into an orthogonal path with rounded corners.
function edgePath(text) {
  const n = text.trim().split(/\s+/).map(Number);
  const pts = [[n[0], n[1]]];
  let [x, y] = n;
  for (let k = 2; k < n.length; k++) {
    if (k % 2 === 0) y = n[k]; else x = n[k];
    pts.push([x, y]);
  }
  let d = `M${pts[0]}`;
  for (let k = 1; k < pts.length - 1; k++) {
    const [px, py] = pts[k - 1], [cx, cy] = pts[k], [nx, ny] = pts[k + 1];
    const a = Math.hypot(cx - px, cy - py), b = Math.hypot(nx - cx, ny - cy);
    const r = Math.min(radius, a / 2, b / 2);
    d += `L${cx - (cx - px) / a * r} ${cy - (cy - py) / a * r}Q${cx} ${cy} ${cx + (nx - cx) / b * r} ${cy + (ny - cy) / b * r}`;
  }
  return d + `L${pts[pts.length - 1]}`;
}

const paths = edges.trim().split(/[;\n]/).map(edgePath);
const nodes = rows.flatMap(([y, list]) => {
  const parts = list.split(' ');
  return parts.flatMap((name, k) => k % 2 ? [] : [{ name, x: +parts[k + 1], y }]);
});

document.getElementById('graph').innerHTML =
  paths.map(d => `<path class="edge" d="${d}"/>`).join('') +
  nodes.filter(n => n.y < 800).map(n =>
    `<rect class="node" x="${n.x - 14}" y="${n.y - 6.5}" width="28" height="13" rx="1.5"/>` +
    (n.name === 'IRF4' ? '' : `<text class="label" x="${n.x}" y="${n.y + 1.6}">${n.name}</text>`)).join('');

document.getElementById('mini').innerHTML =
  '<g transform="translate(-80.6 -22.9) scale(.236 .2371)">' +
  paths.map(d => `<path class="mini-edge" d="${d}"/>`).join('') +
  nodes.map(n =>
    `<rect class="mini-node" x="${n.x - 14}" y="${n.y - 6.5}" width="28" height="13"/>` +
    `<rect class="mini-mark" x="${n.x - 9}" y="${n.y - 2}" width="18" height="4"/>`).join('') + '</g>';
```
